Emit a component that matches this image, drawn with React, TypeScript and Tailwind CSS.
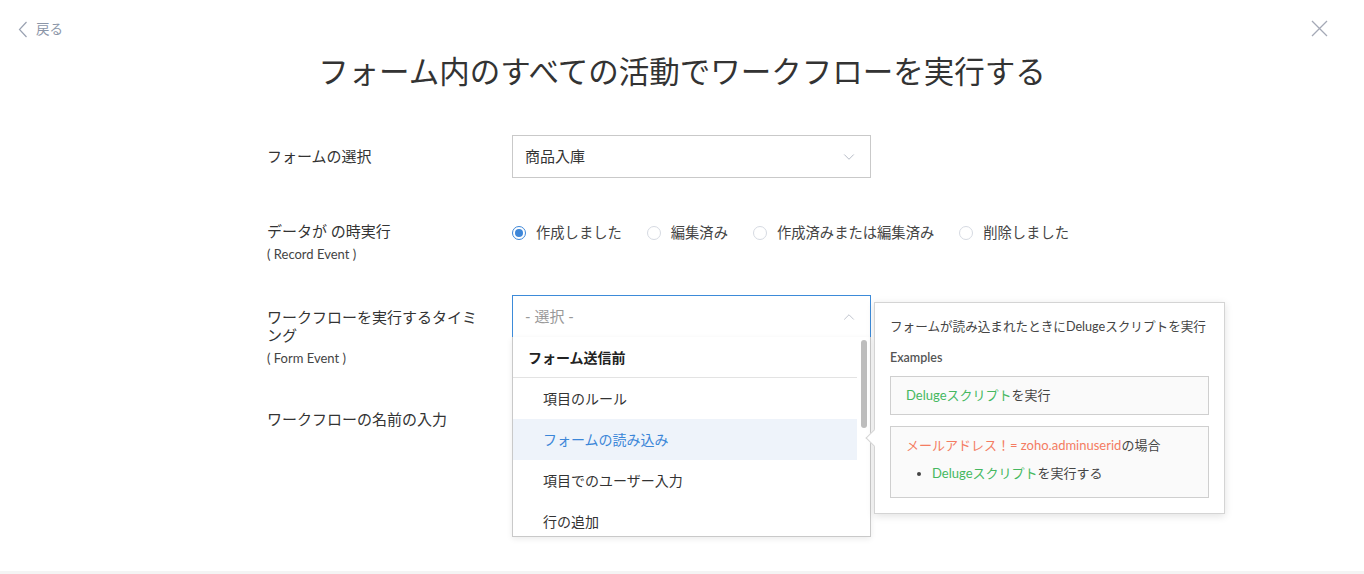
import React from 'react';
import { ChevronDown, ChevronUp } from 'lucide-react';

const font = { fontFamily: '"Lato", "Noto Sans CJK JP", sans-serif' };

const radios = [
  { label: '作成しました', checked: true },
  { label: '編集済み', checked: false },
  { label: '作成済みまたは編集済み', checked: false },
  { label: '削除しました', checked: false },
];

const menuItems = ['項目のルール', 'フォームの読み込み', '項目でのユーザー入力', '行の追加'];

const Radio = ({ label, checked }: { label: string; checked: boolean }) => (
  <label className="flex items-center h-[20px]">
    <span
      className={`w-[14px] h-[14px] rounded-full border flex items-center justify-center ${
        checked ? 'border-[#3d86d8]' : 'border-[#d6dae2]'
      }`}
    >
      {checked && <span className="w-[8px] h-[8px] rounded-full bg-[#3d86d8]" />}
    </span>
    <span className="ml-[10px] text-[14.3px] text-[#444]">{label}</span>
  </label>
);

const HelpPopover = () => (
  <div className="absolute left-[362px] top-[7px] w-[351px] bg-white border border-[#d4d4d4] shadow-[0_2px_8px_rgba(0,0,0,0.12)] px-[15px] pt-[14px] pb-[15px] z-20">
    {/* arrow */}
    <div className="absolute -left-[7px] top-[129px] w-[12px] h-[12px] bg-white border-l border-b border-[#d4d4d4] rotate-45" />
    <p className="text-[12.6px] leading-[20px] text-[#444] whitespace-nowrap">
      フォームが読み込まれたときにDelugeスクリプトを実行
    </p>
    <p className="mt-[11px] text-[12.5px] leading-[20px] font-semibold text-[#555]">Examples</p>
    <div className="mt-[8px] h-[39px] border border-[#cfcfcf] bg-[#fafafa] flex items-center px-[15px] text-[13px] text-[#444]">
      <span className="text-[#45b860]">Delugeスクリプト</span>を実行
    </div>
    <div className="mt-[11px] h-[72px] border border-[#cfcfcf] bg-[#fafafa] px-[15px] pt-[8px] text-[13px] text-[#444]">
      <p className="leading-[20px]">
        <span className="text-[#f47c62]">メールアドレス！= zoho.adminuserid</span>の場合
      </p>
      <ul className="mt-[8px] pl-[26px] list-disc leading-[20px] marker:text-[#444]">
        <li>
          <span className="text-[#45b860]">Delugeスクリプト</span>を実行する
        </li>
      </ul>
    </div>
  </div>
);

const EventDropdown = () => (
  <div className="absolute left-0 top-[42px] w-[359px] h-[200px] bg-white border border-[#c9c9c9] border-t-0 shadow-[0_2px_6px_rgba(0,0,0,0.08)] overflow-hidden z-10 flex">
    <div className="flex-1">
      <div className="h-[41px] flex items-center pl-[15px] text-[14px] font-bold text-[#222] border-b border-[#e3e3e3]">
        フォーム送信前
      </div>
      {menuItems.map((item, i) => (
        <div
          key={item}
          className={`h-[41px] flex items-center pl-[30px] text-[14px] ${
            i === 1 ? 'bg-[#eef3fa] text-[#3b86d8]' : 'text-[#333]'
          }`}
        >
          {item}
        </div>
      ))}
    </div>
    <div className="w-[13px] pt-[3px] flex justify-center">
      <div className="w-[6px] h-[88px] rounded-full bg-[#bdbdbd]" />
    </div>
  </div>
);

export default function App() {
  return (
    <div className="h-[574px] bg-white flex flex-col overflow-hidden" style={font}>
      <header className="flex justify-between items-start pt-[19px] pl-[18px] pr-[36px]">
        <button className="flex items-center h-[20px] text-[#8c96a8] text-[13.5px]">
          <svg width="10" height="17" viewBox="0 0 10 17" fill="none">
            <path d="M8.5 1 L1.5 8.5 L8.5 16" stroke="#9aa2b2" strokeWidth="1.2" />
          </svg>
          <span className="ml-[8px]">戻る</span>
        </button>
        <button className="mt-[1px]">
          <svg width="17" height="17" viewBox="0 0 17 17" fill="none">
            <path d="M1 1 L16 16 M16 1 L1 16" stroke="#a4a9b6" strokeWidth="1.3" />
          </svg>
        </button>
      </header>

      <h1 className="mt-[12px] text-center text-[30.5px] leading-[40px] text-[#333]">
        フォーム内のすべての活動でワークフローを実行する
      </h1>

      <div className="w-[830px] mx-auto mt-[44px]">
        {/* form select */}
        <div className="flex items-center">
          <div className="w-[245px] text-[15px] text-[#333]">フォームの選択</div>
          <div className="w-[359px] h-[43px] border border-[#c9c9c9] flex items-center justify-between pl-[12px] pr-[12px] text-[15px] text-[#333]">
            <span>商品入庫</span>
            <ChevronDown className="w-[18px] h-[18px] text-[#a6acb8]" strokeWidth={1.1} />
          </div>
        </div>

        {/* record event */}
        <div className="flex items-start mt-[43px]">
          <div className="w-[245px]">
            <div className="text-[15px] leading-[20px] text-[#333]">データが の時実行</div>
            <div className="mt-[3px] text-[13px] leading-[20px] text-[#444]">( Record Event )</div>
          </div>
          <div className="flex items-center gap-[25px] pt-[2px]">
            {radios.map((r) => (
              <Radio key={r.label} label={r.label} checked={r.checked} />
            ))}
          </div>
        </div>

        {/* form event */}
        <div className="flex items-start mt-[31px]">
          <div className="w-[245px] pt-[13px]">
            <div className="w-[218px] text-[15px] leading-[18px] text-[#333]">ワークフローを実行するタイミング</div>
            <div className="mt-[4px] text-[13px] leading-[20px] text-[#444]">( Form Event )</div>
          </div>
          <div className="relative w-[359px]">
            <div className="h-[42px] border border-[#3d8bd9] border-b-0 flex items-center justify-between pl-[12px] pr-[12px] text-[15px] text-[#999]">
              <span>- 選択 -</span>
              <ChevronUp className="w-[18px] h-[18px] text-[#b4b9c4]" strokeWidth={1.1} />
            </div>
            <EventDropdown />
            <HelpPopover />
          </div>
        </div>

        {/* workflow name */}
        <div className="flex items-start mt-[41px]">
          <div className="w-[245px] text-[15px] leading-[20px] text-[#333]">ワークフローの名前の入力</div>
          <div className="w-[359px] h-[40px] border border-[#c9c9c9]" />
        </div>
      </div>

      <div className="flex-1" />
      <div className="h-[3px] bg-[#f4f4f4]" />
    </div>
  );
}
